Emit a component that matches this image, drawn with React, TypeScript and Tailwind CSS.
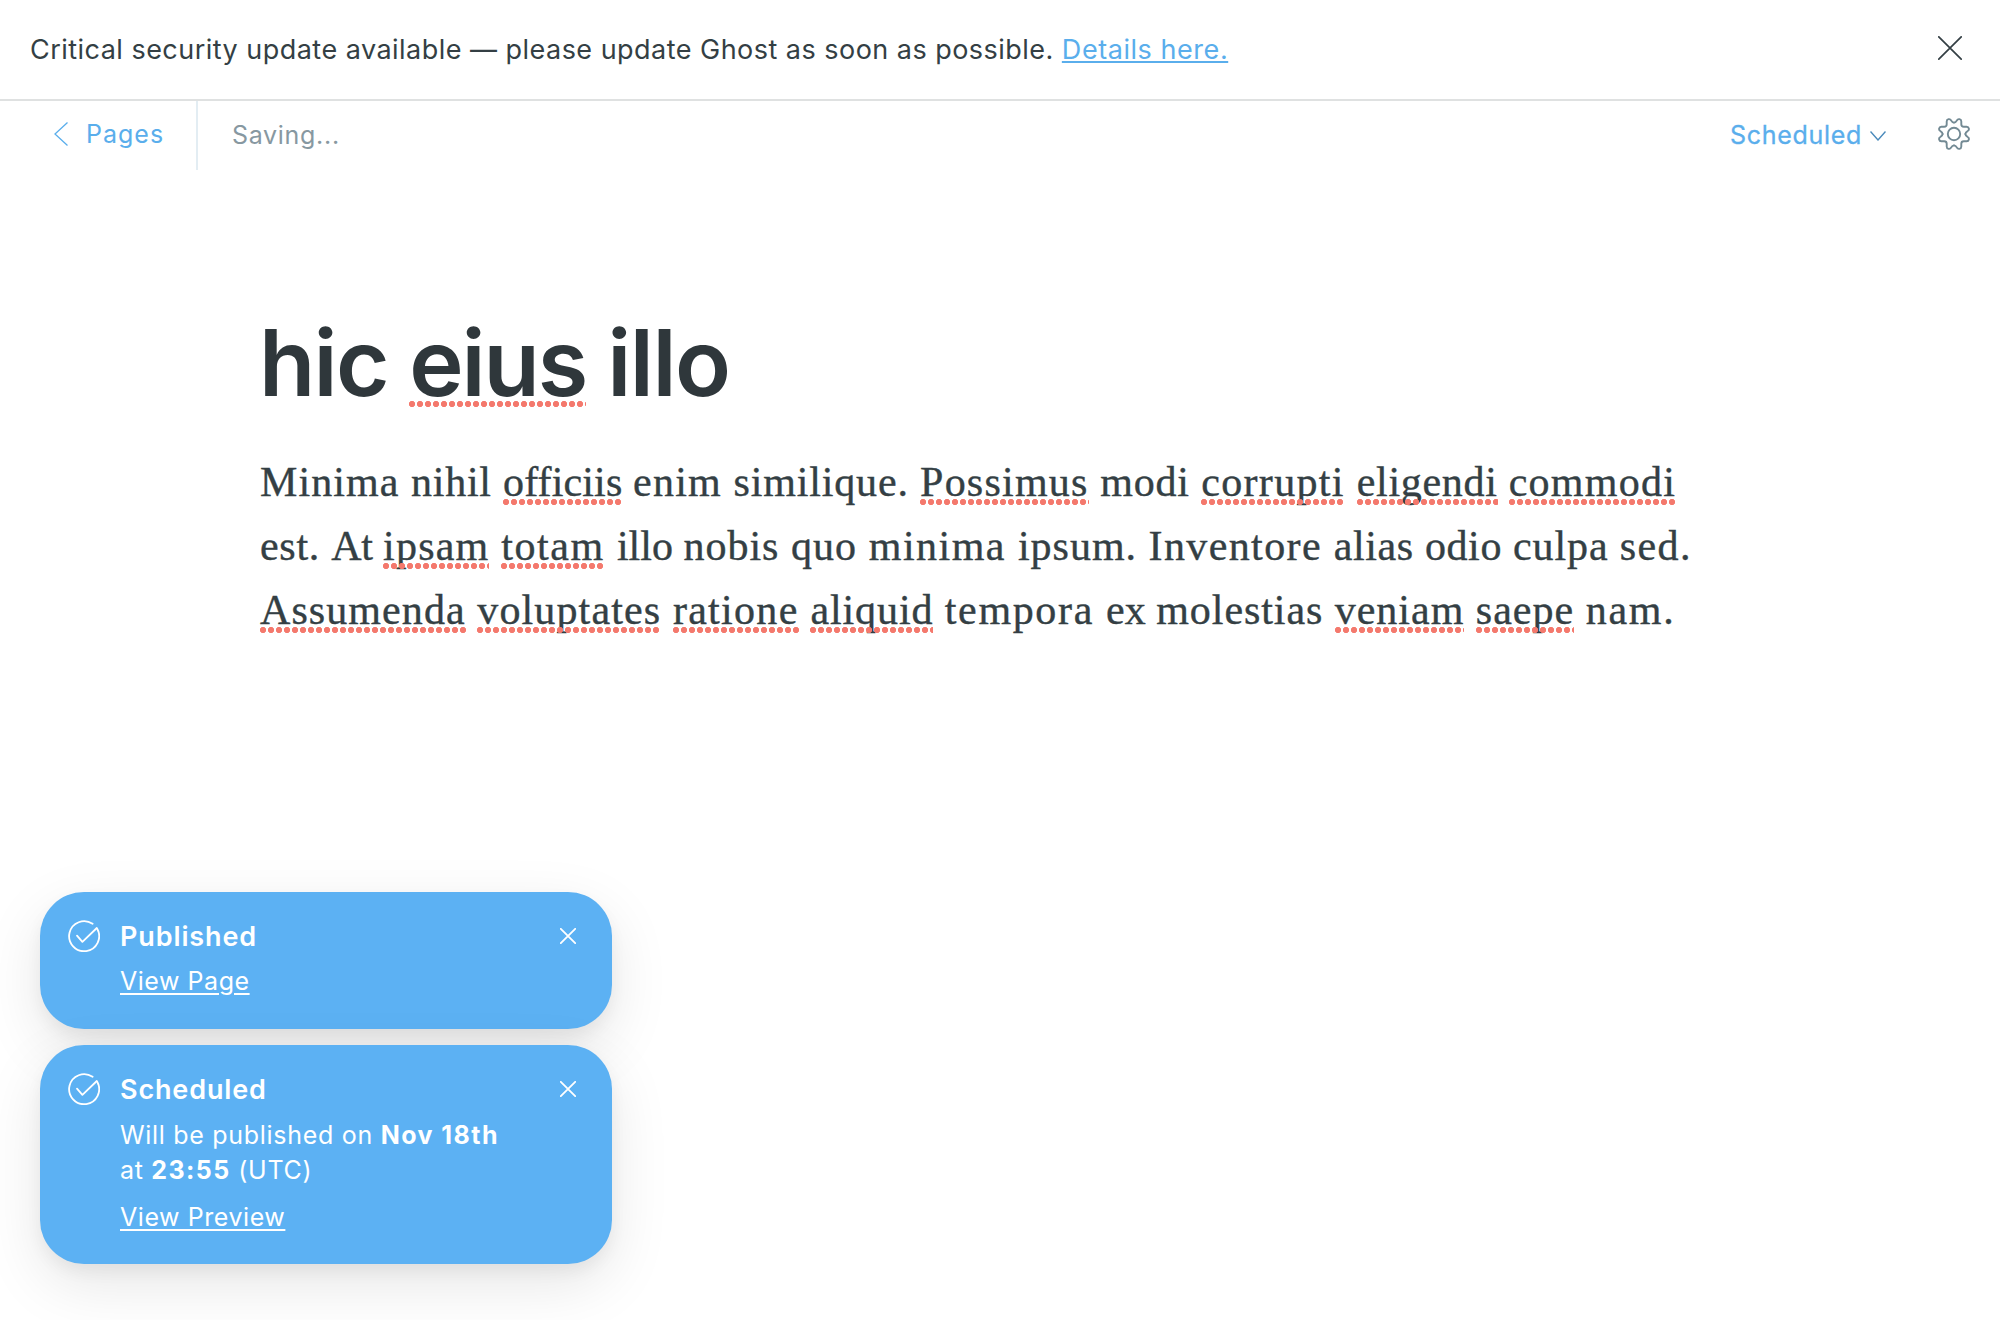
import React from "react";

type Word = { text: string; tracking: string; misspelled?: boolean };

const LINES: Word[][] = [
  [
    { text: "Minima", tracking: "tracking-[1.07px]" },
    { text: "nihil", tracking: "tracking-[0.75px]" },
    { text: "officiis", tracking: "tracking-[0.15px]", misspelled: true },
    { text: "enim", tracking: "tracking-[1.2px]" },
    { text: "similique.", tracking: "tracking-[0.83px]" },
    { text: "Possimus", tracking: "tracking-[1.22px]", misspelled: true },
    { text: "modi", tracking: "tracking-[0.8px]" },
    { text: "corrupti", tracking: "tracking-[1.34px]", misspelled: true },
    { text: "eligendi", tracking: "tracking-[0.69px]", misspelled: true },
    { text: "commodi", tracking: "tracking-[1.25px]", misspelled: true },
  ],
  [
    { text: "est.", tracking: "tracking-[0.7px]" },
    { text: "At", tracking: "tracking-[-0.2px]" },
    { text: "ipsam", tracking: "tracking-[1.2px]", misspelled: true },
    { text: "totam", tracking: "tracking-[1.6px]", misspelled: true },
    { text: "illo", tracking: "tracking-[0px]" },
    { text: "nobis", tracking: "tracking-[1px]" },
    { text: "quo", tracking: "tracking-[1.1px]" },
    { text: "minima", tracking: "tracking-[1.46px]" },
    { text: "ipsum.", tracking: "tracking-[1px]" },
    { text: "Inventore", tracking: "tracking-[1.38px]" },
    { text: "alias", tracking: "tracking-[0.6px]" },
    { text: "odio", tracking: "tracking-[0.6px]" },
    { text: "culpa", tracking: "tracking-[0.87px]" },
    { text: "sed.", tracking: "tracking-[1.4px]" },
  ],
  [
    { text: "Assumenda", tracking: "tracking-[1.08px]", misspelled: true },
    { text: "voluptates", tracking: "tracking-[1.13px]", misspelled: true },
    { text: "ratione", tracking: "tracking-[1.3px]", misspelled: true },
    { text: "aliquid", tracking: "tracking-[0.9px]", misspelled: true },
    { text: "tempora", tracking: "tracking-[1.65px]" },
    { text: "ex", tracking: "tracking-[0px]" },
    { text: "molestias", tracking: "tracking-[0.93px]" },
    { text: "veniam", tracking: "tracking-[1px]", misspelled: true },
    { text: "saepe", tracking: "tracking-[1px]", misspelled: true },
    { text: "nam.", tracking: "tracking-[1.8px]" },
  ],
];

const DOTS =
  "relative inline-block after:content-[''] after:absolute after:inset-x-0 after:h-1.5 after:bg-[radial-gradient(circle_at_3px_3px,#f4796d_2.8px,transparent_3.4px)] after:bg-[length:8px_6px] after:bg-repeat-x";

function Cross({ size, width }: { size: number; width: number }) {
  return (
    <svg width={size} height={size} viewBox={`0 0 ${size} ${size}`} fill="none" stroke="currentColor" strokeWidth={width} strokeLinecap="round">
      <path d={`M.8 .8L${size - 0.8} ${size - 0.8}M${size - 0.8} .8L.8 ${size - 0.8}`} />
    </svg>
  );
}

function Gear() {
  const quarter =
    "M16 4.6C17.8 4.6 18.4 3.4 19 2.3C19.9 .4 23.3 .8 23.3 3.4L23.3 6.2C23.3 7.8 24.2 8.7 25.8 8.7L28.6 8.7C31.2 8.7 31.6 12.1 29.7 13C28.6 13.6 27.4 14.2 27.4 16";
  return (
    <svg width="32" height="32" viewBox="0 0 32 32" fill="none" stroke="currentColor" strokeWidth="1.9" strokeLinecap="round">
      <path d={quarter} />
      <path d={quarter} transform="rotate(90 16 16)" />
      <path d={quarter} transform="rotate(180 16 16)" />
      <path d={quarter} transform="rotate(270 16 16)" />
      <circle cx="16" cy="16" r="6.2" />
    </svg>
  );
}

function CheckCircle() {
  return (
    <svg className="mt-0.5 shrink-0" width="32" height="32" viewBox="0 0 32 32" fill="none" stroke="currentColor" strokeWidth="1.8" strokeLinecap="round" strokeLinejoin="round">
      <path d="M24.6 3.8A15 15 0 1 0 29.2 8.8" />
      <path d="M9 15.6L14.4 21.8L28.8 8" />
    </svg>
  );
}

function Toast({ title, titleClass, className, children }: { title: string; titleClass: string; className: string; children: React.ReactNode }) {
  return (
    <div className={`flex w-[572px] rounded-[44px] bg-[#5cb1f3] pt-[26px] pr-9 pl-7 text-white shadow-[0_8px_16px_rgba(0,0,0,0.05),0_20px_60px_rgba(0,0,0,0.10)] ${className}`}>
      <CheckCircle />
      <div className="mt-px ml-5 grow text-[25px] leading-[35px]">
        <h3 className={`text-[27px] leading-9 font-semibold ${titleClass}`}>{title}</h3>
        {children}
      </div>
      <button className="mt-2.5 flex size-4">
        <Cross size={16} width={1.8} />
      </button>
    </div>
  );
}

export default function App() {
  return (
    <div className="relative flex h-[1320px] w-[2000px] flex-col overflow-hidden bg-white font-['Inter',sans-serif] text-[#343f44]">
      <div className="flex h-[101px] shrink-0 items-start justify-between border-b-2 border-[#dfe1e1] pt-[30px] pr-[38px] pl-[30px]">
        <p className="text-[27px] leading-10 tracking-[0.47px] whitespace-pre">
          {"Critical security update available — please update Ghost as soon as possible. "}
          <a className="tracking-[0.55px] text-[#5aaeec] underline decoration-2 underline-offset-[2px]">Details here.</a>
        </p>
        <button className="mt-[6px] flex">
          <Cross size={24} width={1.7} />
        </button>
      </div>

      <header className="flex h-[69px] shrink-0 items-start text-[25px] leading-9">
        <a className="flex h-full w-[198px] border-r-2 border-[#e3edf3] pt-[15px] pl-[54px] tracking-[1px] text-[#5aaeec]">
          <svg className="mt-1.5" width="14" height="24" viewBox="0 0 14 24" fill="none" stroke="currentColor" strokeWidth="1.3">
            <path d="M13.5 .5L1 12L13.5 23.5" />
          </svg>
          <span className="ml-[18px]">Pages</span>
        </a>
        <span className="pt-4 pl-[34px] tracking-[0.7px] text-[#8798a1]">Saving...</span>
        <div className="ml-auto flex pr-[30px]">
          <span className="pt-4 tracking-[0.7px] text-[#5aaeec] [-webkit-text-stroke:0.3px_#5aaeec]">Scheduled</span>
          <svg className="mt-[30px] ml-2 text-[#4a8abb]" width="16" height="10" viewBox="0 0 16 10" fill="none" stroke="currentColor" strokeWidth="1.4">
            <path d="M.5 .5L8 9L15.5 .5" />
          </svg>
          <button className="mt-[17px] ml-[52px] flex size-8 text-[#738a94]">
            <Gear />
          </button>
        </div>
      </header>

      <main className="pt-[138px] pl-[259px]">
        <h1 className="text-[92px] leading-[110px] font-semibold whitespace-nowrap text-[#2f373b]">
          <span className="tracking-[-1.75px]">hic </span>
          <span className="tracking-[-2.1px]">
            <span className={`${DOTS} after:top-[93px]`}>eius</span>{" "}
          </span>
          <span className="tracking-[-1.5px]">illo</span>
        </h1>
        <div className="mt-8 pl-px font-['Liberation_Serif',serif] text-[42px] leading-[64px] whitespace-nowrap [-webkit-text-stroke:0.4px_#343f44]">
          {LINES.map((line, i) => (
            <div key={i}>
              {line.map((w, j) => (
                <span key={j} className={w.tracking}>
                  {w.misspelled ? <span className={`${DOTS} after:top-[49px]`}>{w.text}</span> : w.text}{" "}
                </span>
              ))}
            </div>
          ))}
        </div>
      </main>

      <aside className="absolute bottom-14 left-10 flex flex-col gap-4">
        <Toast title="Published" titleClass="tracking-[0.88px]" className="h-[137px]">
          <a className="mt-[9px] block w-fit tracking-[0.53px] underline decoration-2 underline-offset-[3px]">View Page</a>
        </Toast>
        <Toast title="Scheduled" titleClass="tracking-[0.85px]" className="h-[219px]">
          <p className="mt-2.5 tracking-[0.7px] whitespace-nowrap">
            Will be published on <strong className="font-bold tracking-[1.45px]">Nov 18th</strong>
            <br />
            at <strong className="font-bold tracking-[1.4px]">23:55</strong> (UTC)
          </p>
          <a className="mt-3 block w-fit tracking-[0.56px] underline decoration-2 underline-offset-[3px]">View Preview</a>
        </Toast>
      </aside>
    </div>
  );
}
